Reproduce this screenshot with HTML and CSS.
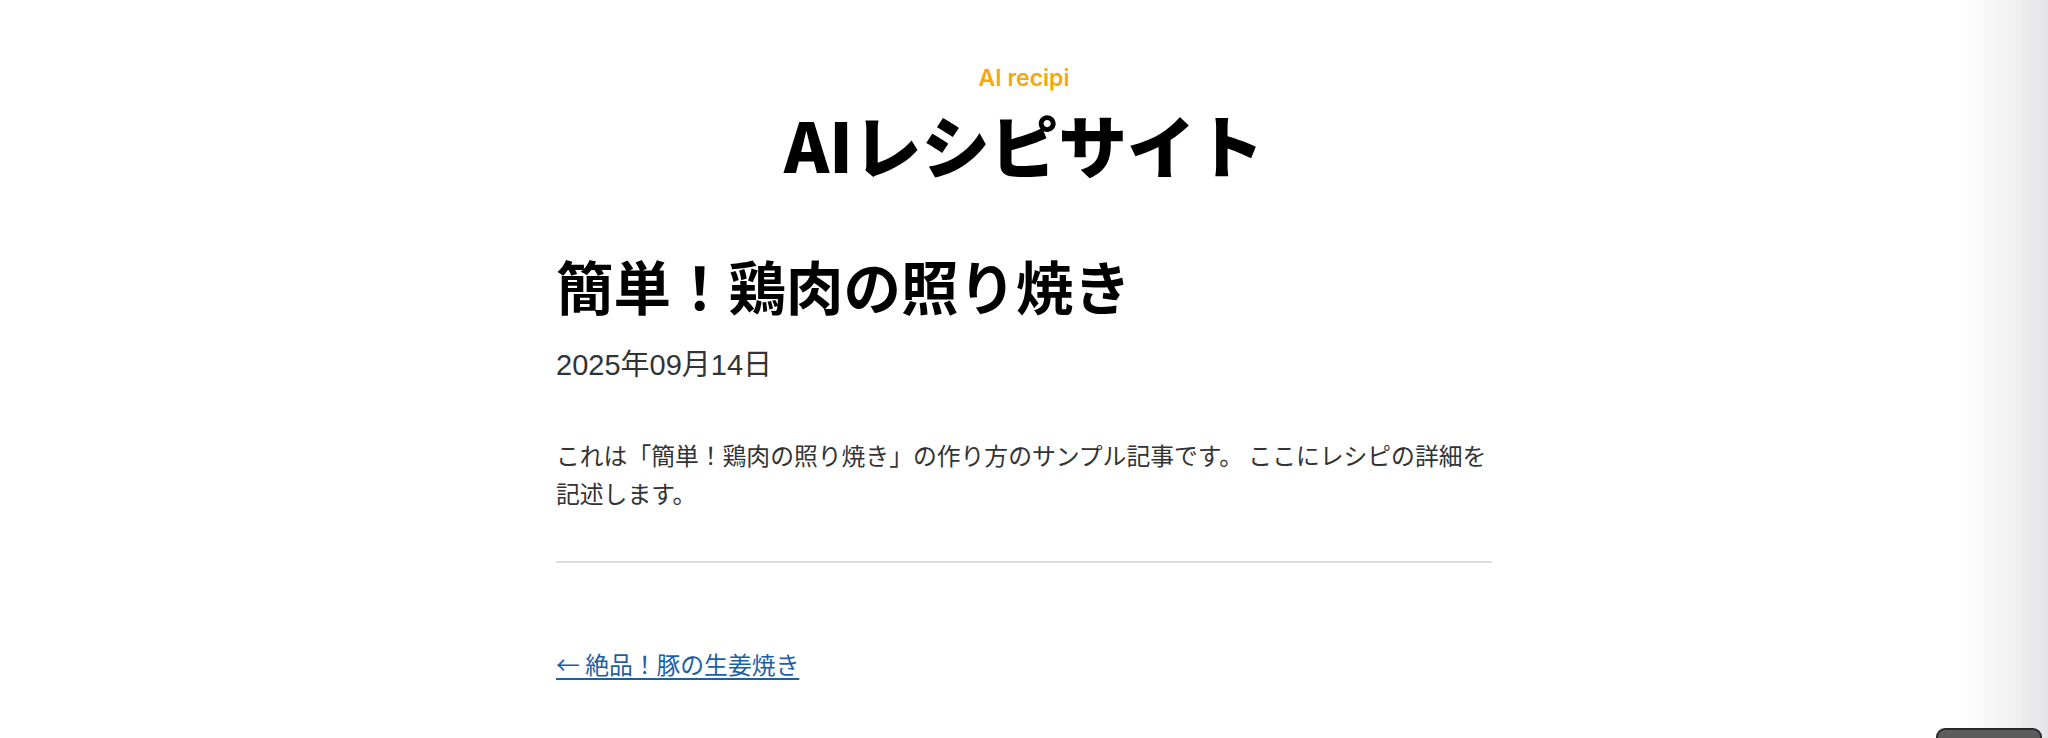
FILE: index.html
```html
<!DOCTYPE html>
<html lang="ja">
<head>
<meta charset="utf-8">
<title>簡単！鶏肉の照り焼き – AIレシピサイト</title>
<link rel="stylesheet" href="styles.css">
</head>
<body>
<header class="site-header">
  <p class="site-tagline">AI recipi</p>
  <h1 class="site-title">AIレシピサイト</h1>
</header>
<main class="content">
  <article class="post">
    <h2 class="post-title">簡単！鶏肉の照り焼き</h2>
    <p class="post-date">2025年09月14日</p>
    <p class="post-body">これは「簡単！鶏肉の照り焼き」の作り方のサンプル記事です。 ここにレシピの詳細を記述します。</p>
  </article>
  <hr class="divider">
  <nav class="post-nav">
    <a class="prev-link" href="#">← 絶品！豚の生姜焼き</a>
  </nav>
</main>
<div class="edge-shade"></div>
<div class="corner-button"></div>
</body>
</html>
```
FILE: styles.css
```css
html, body {
  margin: 0;
  padding: 0;
  background: #ffffff;
}
body {
  font-family: "Noto Sans CJK JP", "Noto Sans", sans-serif;
  color: #333333;
  overflow: hidden;
}
.site-header {
  padding-top: 64px;
  text-align: center;
}
.site-tagline {
  margin: 0;
  font-family: Inter, "Noto Sans CJK JP", sans-serif;
  font-weight: 600;
  font-size: 23px;
  line-height: 29px;
  color: #f6a70c;
}
.site-title {
  margin: 11px 0 0;
  font-family: "Noto Sans CJK JP", sans-serif;
  font-weight: 800;
  font-size: 68.5px;
  line-height: 80px;
  color: #000000;
}
.content {
  width: 936px;
  margin: 64px auto 0;
}
.post-title {
  margin: 0;
  font-weight: 700;
  font-size: 57.5px;
  line-height: 74px;
  color: #000000;
}
.post-date {
  margin: 23px 0 0;
  font-family: "Liberation Sans", "Noto Sans CJK JP", sans-serif;
  font-size: 29px;
  line-height: 40px;
  color: #333333;
}
.post-body {
  margin: 51px 0 0;
  font-size: 23.8px;
  line-height: 38px;
  color: #333333;
}
.divider {
  margin: 49px 0 0;
  border: 0;
  height: 2px;
  background: #dddddd;
}
.post-nav {
  margin-top: 82px;
  font-size: 23.8px;
  line-height: 38px;
}
.prev-link {
  color: #1c5fa6;
  text-decoration: underline;
  text-decoration-thickness: 2px;
  text-underline-offset: 4px;
}
.edge-shade {
  position: fixed;
  top: 0;
  right: 0;
  width: 90px;
  height: 100%;
  background: linear-gradient(to right, rgba(230,230,232,0) 0%, rgba(232,232,234,0.6) 60%, #e4e4e6 100%);
  pointer-events: none;
}
.corner-button {
  position: fixed;
  right: 6px;
  bottom: -20px;
  width: 102px;
  height: 26px;
  border: 2px solid #2b2b2b;
  border-radius: 9px;
  background: #5c5c5c;
}
```
